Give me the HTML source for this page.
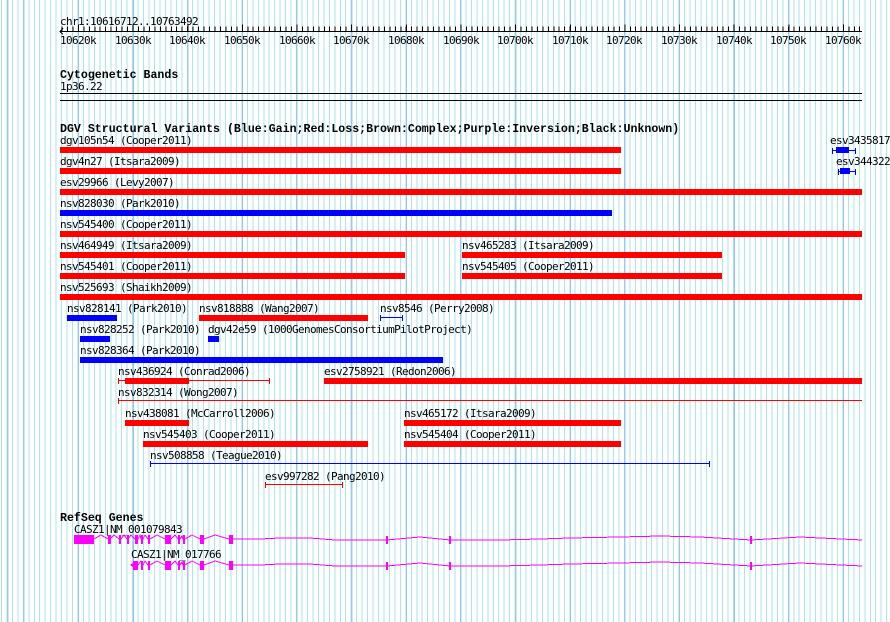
<!DOCTYPE html>
<html><head><meta charset="utf-8"><style>
html,body{margin:0;padding:0;background:#fff}
#w{position:relative;width:890px;height:622px;overflow:hidden;
background-image:repeating-linear-gradient(90deg,#86bde9 0,#86bde9 1px,transparent 1px,transparent 54.64px),repeating-linear-gradient(90deg,#a9e6ee 0,#a9e6ee 1px,transparent 1px,transparent 5.464px);
background-position:23.4px 0,1px 0;}
svg{position:absolute;left:0;top:0}
text{font-family:"DejaVu Sans Mono","Liberation Mono",monospace;font-size:11px;letter-spacing:-0.62px;fill:#000}
.b{font-weight:bold;font-size:11.6px;letter-spacing:0;font-family:"Liberation Mono",monospace}
</style></head><body><div id="w">
<svg width="890" height="622" xmlns="http://www.w3.org/2000/svg" shape-rendering="crispEdges">
<text x="60" y="25">chr1:10616712..10763492</text>
<line x1="60" y1="31.5" x2="862" y2="31.5" stroke="#000"/>
<line x1="61.5" y1="29" x2="862" y2="29" stroke="#000" stroke-width="5" stroke-dasharray="1 4.464"/>
<line x1="78" y1="28" x2="862" y2="28" stroke="#000" stroke-width="7" stroke-dasharray="1 53.64"/>
<polyline points="63,28.5 60,31.5 63,34.5" fill="none" stroke="#000"/>
<g>
<text x="60" y="44">10620k</text><text x="115" y="44">10630k</text><text x="169" y="44">10640k</text><text x="224" y="44">10650k</text><text x="279" y="44">10660k</text><text x="333" y="44">10670k</text><text x="388" y="44">10680k</text><text x="443" y="44">10690k</text><text x="497" y="44">10700k</text><text x="552" y="44">10710k</text><text x="606" y="44">10720k</text><text x="661" y="44">10730k</text><text x="716" y="44">10740k</text><text x="770" y="44">10750k</text><text x="825" y="44">10760k</text>
</g>
<text class="b" x="60" y="78">Cytogenetic Bands</text>
<text x="60" y="90">1p36.22</text>
<line x1="60" y1="93.5" x2="862" y2="93.5" stroke="#000"/>
<line x1="60" y1="100.5" x2="862" y2="100.5" stroke="#000"/>
<text class="b" x="60" y="132">DGV Structural Variants (Blue:Gain;Red:Loss;Brown:Complex;Purple:Inversion;Black:Unknown)</text>
<g fill="#f00">
<text x="60" y="144" fill="#000">dgv105n54 (Cooper2011)</text><rect x="60" y="147" width="561" height="6"/>
<text x="60" y="165" fill="#000">dgv4n27 (Itsara2009)</text><rect x="60" y="168" width="561" height="6"/>
<text x="60" y="186" fill="#000">esv29966 (Levy2007)</text><rect x="60" y="189" width="802" height="6"/>
<text x="60" y="207" fill="#000">nsv828030 (Park2010)</text><rect x="60" y="210" width="552" height="6" fill="#00f"/>
<text x="60" y="228" fill="#000">nsv545400 (Cooper2011)</text><rect x="60" y="231" width="802" height="6"/>
<text x="60" y="249" fill="#000">nsv464949 (Itsara2009)</text><rect x="60" y="252" width="345" height="6"/>
<text x="462" y="249" fill="#000">nsv465283 (Itsara2009)</text><rect x="462" y="252" width="260" height="6"/>
<text x="60" y="270" fill="#000">nsv545401 (Cooper2011)</text><rect x="60" y="273" width="345" height="6"/>
<text x="462" y="270" fill="#000">nsv545405 (Cooper2011)</text><rect x="462" y="273" width="260" height="6"/>
<text x="60" y="291" fill="#000">nsv525693 (Shaikh2009)</text><rect x="60" y="294" width="802" height="6"/>
<text x="67" y="312" fill="#000">nsv828141 (Park2010)</text><rect x="67" y="315" width="50" height="6" fill="#00f"/>
<text x="199" y="312" fill="#000">nsv818888 (Wang2007)</text><rect x="199" y="315" width="169" height="6"/>
<text x="380" y="312" fill="#000">nsv8546 (Perry2008)</text>
<text x="80" y="333" fill="#000">nsv828252 (Park2010)</text><rect x="80" y="336" width="30" height="6" fill="#00f"/>
<text x="208" y="333" fill="#000">dgv42e59 (1000GenomesConsortiumPilotProject)</text><rect x="208" y="336" width="11" height="6" fill="#00f"/>
<text x="80" y="354" fill="#000">nsv828364 (Park2010)</text><rect x="80" y="357" width="363" height="6" fill="#00f"/>
<text x="118" y="375" fill="#000">nsv436924 (Conrad2006)</text><rect x="125" y="378" width="64" height="6"/>
<text x="324" y="375" fill="#000">esv2758921 (Redon2006)</text><rect x="324" y="378" width="538" height="6"/>
<text x="118" y="396" fill="#000">nsv832314 (Wong2007)</text>
<text x="125" y="417" fill="#000">nsv438081 (McCarroll2006)</text><rect x="125" y="420" width="64" height="6"/>
<text x="404" y="417" fill="#000">nsv465172 (Itsara2009)</text><rect x="404" y="420" width="217" height="6"/>
<text x="143" y="438" fill="#000">nsv545403 (Cooper2011)</text><rect x="143" y="441" width="225" height="6"/>
<text x="404" y="438" fill="#000">nsv545404 (Cooper2011)</text><rect x="404" y="441" width="217" height="6"/>
<text x="150" y="459" fill="#000">nsv508858 (Teague2010)</text>
<text x="265" y="480" fill="#000">esv997282 (Pang2010)</text>
<text x="830" y="144" fill="#000">esv3435817</text><rect x="836" y="147" width="13" height="6" fill="#00f"/>
<text x="836" y="165" fill="#000">esv344322</text><rect x="840" y="168" width="10" height="6" fill="#00f"/>
</g>
<g stroke="#00f" fill="none">
<path d="M832 150.5H856M832.5 148v6M855.5 148v6"/>
<path d="M838 171.5H856M838.5 169v6M855.5 169v6"/>
<path d="M380 317.5H403M380.5 315v6M402.5 315v6"/>
<path d="M150 463.5H710M150.5 461v6M709.5 461v6"/>
</g>
<g stroke="#f00" fill="none">
<path d="M118 380.5H270M118.5 378v6M269.5 378v6"/>
<path d="M118 400.5H862M118.5 398v6"/>
<path d="M265 484.5H343M265.5 482v6M342.5 482v6"/>
</g>
<text class="b" x="60" y="521">RefSeq Genes</text>
<text x="74" y="533">CASZ1|NM_001079843</text>
<text x="131" y="558">CASZ1|NM_017766</text>
<g stroke="#f0f" fill="#f0f">
<polyline fill="none" points="94,539 101,535 108,539 110,539 114,535 119,539 121,539 124,535 127,539 128,539 131,535 135,539 138,539 140,535 141,539 143,539 145,535 148,539 150,539 157,535 165,539 171,539 175,535 178,539 180,539 182,536 183,539 185,539 192,535 200,539 204,539 215,535 229,539 233,539 260,539 280,538 310,538 335,540 387,540 420,537 450,540 500,540 540,539 570,538 620,537 660,536 700,537 751,540 800,537 862,540"/>
<rect x="74" y="535" width="20" height="9" stroke="none"/>
<g stroke="none"><rect x="108" y="535" width="3" height="9"/><rect x="119" y="535" width="2" height="9"/><rect x="127" y="535" width="2" height="9"/><rect x="135" y="535" width="3" height="9"/><rect x="141" y="535" width="2" height="9"/><rect x="148" y="535" width="2" height="9"/><rect x="165" y="535" width="6" height="9"/><rect x="178" y="535" width="2" height="9"/><rect x="183" y="535" width="2" height="9"/><rect x="200" y="535" width="4" height="9"/><rect x="229" y="535" width="4" height="9"/><rect x="386" y="536" width="2" height="8"/><rect x="449" y="536" width="2" height="8"/><rect x="750" y="536" width="2" height="8"/></g>
<polyline fill="none" points="131,565 138,565 141,561 143,565 145,561 148,565 150,565 157,561 165,565 171,565 175,561 178,565 180,565 182,562 183,565 185,565 192,561 200,565 204,565 215,561 229,565 233,565 260,565 280,564 310,564 335,566 387,566 420,563 450,566 500,566 540,565 570,564 620,563 660,562 700,563 751,566 800,563 862,566"/>
<polyline fill="none" points="135,562 131,565 135,568"/>
<g stroke="none"><rect x="133" y="561" width="5" height="9"/><rect x="141" y="561" width="2" height="9"/><rect x="148" y="561" width="2" height="9"/><rect x="165" y="561" width="6" height="9"/><rect x="178" y="561" width="2" height="9"/><rect x="183" y="561" width="2" height="9"/><rect x="200" y="561" width="4" height="9"/><rect x="229" y="561" width="4" height="9"/><rect x="386" y="562" width="2" height="8"/><rect x="449" y="562" width="2" height="8"/><rect x="750" y="562" width="2" height="8"/></g>
</g>
</svg></div></body></html>
